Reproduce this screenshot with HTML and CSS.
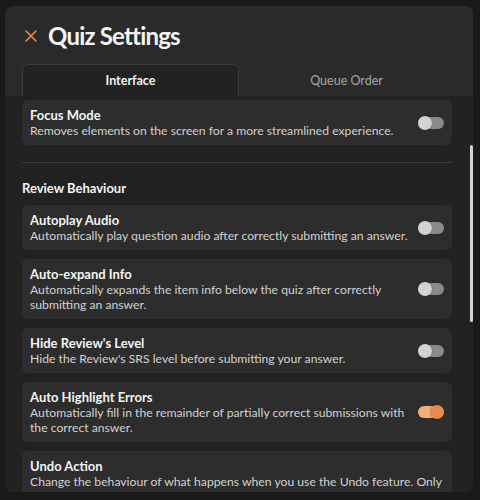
FILE: index.html
```html
<!DOCTYPE html>
<html lang="en">
<head>
<meta charset="utf-8">
<title>Quiz Settings</title>
<link rel="stylesheet" href="styles.css">
</head>
<body>
<div class="modal">
  <header class="modal-head">
    <svg class="close" width="12" height="12" viewBox="0 0 12 12" aria-label="Close">
      <path d="M1 1 L11 11 M11 1 L1 11" stroke="#e8894e" stroke-width="1.6" stroke-linecap="round" fill="none"/>
    </svg>
    <h1 class="title">Quiz Settings</h1>
  </header>
  <nav class="tabs">
    <div class="tab active">Interface</div>
    <div class="tab">Queue Order</div>
  </nav>
  <div class="body">
    <div class="list">
      <div class="card">
        <div class="card-text">
          <div class="card-title">Focus Mode</div>
          <div class="card-desc">Removes elements on the screen for a more streamlined experience.</div>
        </div>
        <div class="toggle"><span class="knob"></span></div>
      </div>
      <hr class="divider">
      <h2 class="section">Review Behaviour</h2>
      <div class="cards">
        <div class="card">
          <div class="card-text">
            <div class="card-title">Autoplay Audio</div>
            <div class="card-desc">Automatically play question audio after correctly submitting an answer.</div>
          </div>
          <div class="toggle"><span class="knob"></span></div>
        </div>
        <div class="card">
          <div class="card-text">
            <div class="card-title">Auto-expand Info</div>
            <div class="card-desc">Automatically expands the item info below the quiz after correctly submitting an answer.</div>
          </div>
          <div class="toggle"><span class="knob"></span></div>
        </div>
        <div class="card">
          <div class="card-text">
            <div class="card-title">Hide Review's Level</div>
            <div class="card-desc">Hide the Review's SRS level before submitting your answer.</div>
          </div>
          <div class="toggle"><span class="knob"></span></div>
        </div>
        <div class="card">
          <div class="card-text">
            <div class="card-title">Auto Highlight Errors</div>
            <div class="card-desc">Automatically fill in the remainder of partially correct submissions with the correct answer.</div>
          </div>
          <div class="toggle on"><span class="knob"></span></div>
        </div>
        <div class="card">
          <div class="card-text">
            <div class="card-title">Undo Action</div>
            <div class="card-desc">Change the behaviour of what happens when you use the Undo feature. Only applies to questions with incorrect answers.</div>
          </div>
        </div>
      </div>
    </div>
    <div class="scrollbar"><div class="thumb"></div></div>
  </div>
</div>
</body>
</html>
```
FILE: styles.css
```css
* { box-sizing: border-box; }

html, body {
  margin: 0;
  height: 500px;
  overflow: hidden;
}

body {
  background: #1a1a1a;
  padding: 6px 7px 0 5px;
  font-family: Lato, "Noto Sans", sans-serif;
  color: #f2f2f2;
}

.modal {
  width: 468px;
  height: 486px;
  background: #2a2a2a;
  border-radius: 8px;
  overflow: hidden;
  display: flex;
  flex-direction: column;
}

.modal-head {
  display: flex;
  align-items: center;
  gap: 11px;
  height: 58px;
  padding: 2px 0 0 20px;
  flex: none;
}

.close { flex: none; }

.title {
  margin: 0;
  font-size: 24px;
  font-weight: 700;
  letter-spacing: -0.8px;
  line-height: 30px;
  color: #f5f5f5;
}

.tabs {
  display: flex;
  width: 432px;
  height: 32px;
  margin-left: 17px;
  flex: none;
}

.tab {
  flex: 1;
  display: flex;
  align-items: center;
  justify-content: center;
  font-size: 12.5px;
  color: #a6a6a6;
}

.tab.active {
  background: #222222;
  border: 1px solid #3b3b3b;
  border-bottom: none;
  border-radius: 6px 6px 0 0;
  color: #f2f2f2;
  font-weight: 700;
}

.body {
  flex: 1;
  min-height: 0;
  background: #222222;
  display: flex;
  overflow: hidden;
}

.list {
  width: 430px;
  margin-left: 17px;
  padding-top: 4px;
  flex: none;
}

.cards {
  display: flex;
  flex-direction: column;
  gap: 9px;
}

.card {
  background: #2d2d2d;
  border-radius: 6px;
  padding: 7px 8px;
  display: flex;
  align-items: center;
  gap: 4px;
}

.card-text {
  flex: 1;
  min-width: 0;
}

.card-title {
  font-size: 13px;
  font-weight: 700;
  line-height: 16px;
  color: #f4f4f4;
}

.card-desc {
  font-size: 12.2px;
  line-height: 15px;
  color: #d2d2d2;
}

.toggle {
  flex: none;
  width: 26px;
  height: 12px;
  border-radius: 6px;
  background: #8a8a8a;
  display: flex;
  align-items: center;
  justify-content: flex-start;
}

.toggle .knob {
  width: 14px;
  height: 14px;
  border-radius: 50%;
  background: #d3d3d3;
  box-shadow: 0 0 1px rgba(0, 0, 0, 0.5);
  flex: none;
}

.toggle.on {
  background: #eeb07a;
  justify-content: flex-end;
}

.toggle.on .knob {
  background: #e8894e;
}

.divider {
  border: none;
  border-top: 1px solid #3a3a3a;
  margin: 17px 0 0;
  height: 0;
}

.section {
  margin: 16px 0 8px;
  font-size: 13px;
  font-weight: 700;
  line-height: 18px;
  color: #f4f4f4;
}

.scrollbar {
  margin-left: 18px;
  padding-top: 49px;
  flex: none;
}

.thumb {
  width: 3px;
  height: 177px;
  border-radius: 2px;
  background: #d4d4d4;
}
```
